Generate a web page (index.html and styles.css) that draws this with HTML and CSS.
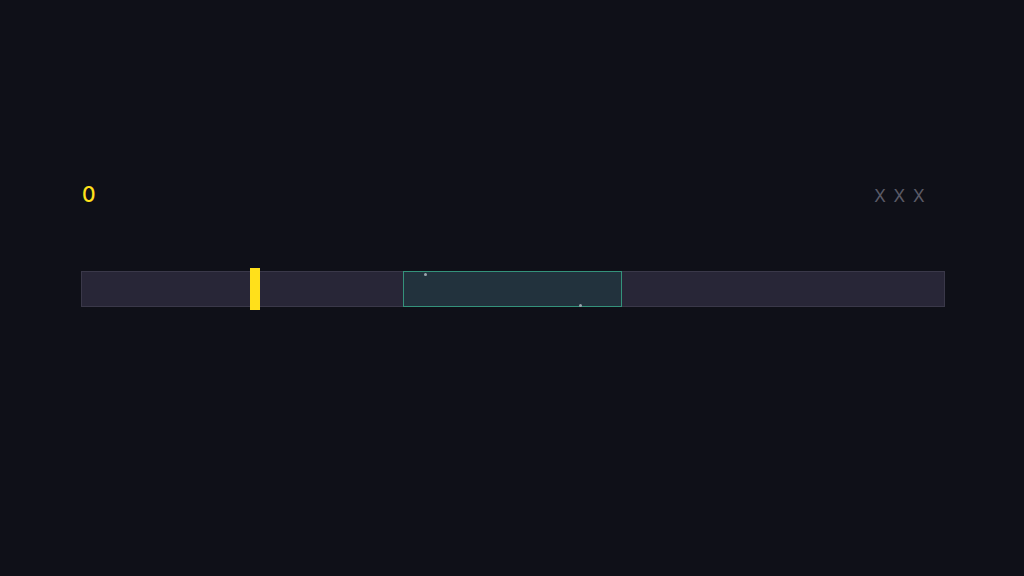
FILE: index.html
```html
<!DOCTYPE html>
<html>
<head>
<meta charset="utf-8">
<link rel="stylesheet" href="styles.css">
</head>
<body>
<main class="game">
  <div class="hud">
    <span class="score">0</span>
    <span class="lives">X X X</span>
  </div>
  <div class="track">
    <div class="zone">
      <span class="dot dot-a"></span>
      <span class="dot dot-b"></span>
    </div>
    <div class="marker"></div>
  </div>
</main>
</body>
</html>
```

FILE: styles.css
```css
html, body {
  margin: 0;
  padding: 0;
  background: #0f1018;
  height: 100%;
}
body {
  font-family: "Inter", "Noto Sans", "Liberation Sans", sans-serif;
}
.game {
  width: 864px;
  margin-left: 81px;
  padding-top: 182px;
  display: flex;
  flex-direction: column;
  gap: 63px;
}
.hud {
  display: flex;
  justify-content: space-between;
  align-items: center;
  padding-right: 20px;
  height: 26px;
}
.score {
  color: #ffe01b;
  font-size: 21px;
  font-weight: 500;
  line-height: 26px;
  padding-left: 1px;
}
.lives {
  color: #5a5a66;
  font-size: 17px;
  letter-spacing: 0.5px;
  line-height: 26px;
  word-spacing: 2px;
  padding-top: 2px;
}
.track {
  position: relative;
  height: 34px;
  background: #282637;
  border: 1px solid #3a3849;
}
.zone {
  position: absolute;
  left: 321px;
  top: -1px;
  width: 217px;
  height: 34px;
  background: #22323d;
  border: 1px solid #34927b;
}
.dot {
  position: absolute;
  width: 3px;
  height: 3px;
  border-radius: 50%;
  background: #9aa6ad;
}
.dot-a { left: 20px; top: 1px; }
.dot-b { left: 175px; top: 32px; }
.marker {
  position: absolute;
  left: 168px;
  top: -4px;
  width: 10px;
  height: 42px;
  background: #ffe01b;
}
```
